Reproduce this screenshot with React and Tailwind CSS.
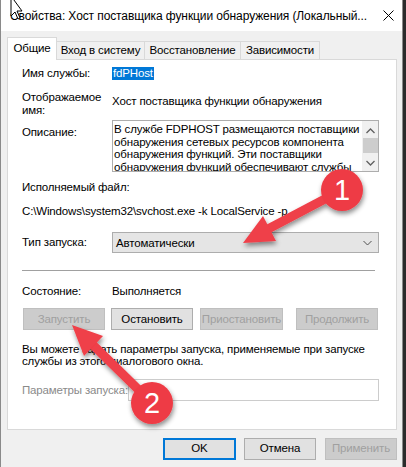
import React from "react";

const font = { fontFamily: '"Liberation Sans", Arial, sans-serif' };

const Tab = ({ children, active, w }) =>
    active ? (
        <div className={`relative z-10 -mb-px h-[23px] ${w} flex items-center justify-center bg-white border border-b-0 border-[#d9d9d9] whitespace-nowrap`}>
            {children}
        </div>
    ) : (
        <div className={`h-[18px] ${w} flex items-center justify-center bg-[#f0f0f0] border border-b-0 border-l-0 border-[#d9d9d9] whitespace-nowrap`}>
            {children}
        </div>
    );

const Btn = ({ children, w, disabled, primary, className = "" }) => (
    <div
        className={`h-[22px] ${w} flex items-center justify-center whitespace-nowrap ${className} ${
            disabled
                ? "bg-[#cccccc] border border-[#bfbfbf] text-[#a0a0a0]"
                : primary
                ? "bg-[#e1e1e1] border-2 border-[#0078d7] text-black"
                : "bg-[#e1e1e1] border border-[#adadad] text-black"
        }`}
    >
        {children}
    </div>
);

const Overlay = () => (
    <svg className="absolute inset-0 pointer-events-none" width="406" height="467" viewBox="0 0 406 467">
        <defs>
            <filter id="sh" x="-30%" y="-30%" width="160%" height="160%">
                <feDropShadow dx="1" dy="3" stdDeviation="2.5" floodColor="#000" floodOpacity="0.45" />
            </filter>
        </defs>
        <g filter="url(#sh)" fill="#ef3f48">
            {/* arrow 1 */}
            <line x1="342" y1="190" x2="268" y2="229" stroke="#ef3f48" strokeWidth="9" />
            <polygon points="243,243 276,241 263,216" />
            <circle cx="342" cy="190" r="21" fill="#ee3a44" />
            {/* arrow 2 */}
            <line x1="152" y1="403" x2="92" y2="344" stroke="#ef3f48" strokeWidth="9" />
            <polygon points="72,325 103,336 84,356" />
            <circle cx="152" cy="403" r="21" fill="#ee3a44" />
        </g>
        <text x="342" y="200" textAnchor="middle" fill="#fff" fontSize="29" fontFamily="Liberation Sans, Arial, sans-serif">1</text>
        <text x="152" y="413" textAnchor="middle" fill="#fff" fontSize="29" fontFamily="Liberation Sans, Arial, sans-serif">2</text>
        {/* mouse cursor */}
        <polygon points="11,-4 11,16 15,12 18,19 20,18 17,11 22,11" fill="#fff" stroke="#000" strokeWidth="1" />
    </svg>
);

export default function App() {
    return (
        <div className="relative w-[406px] h-[467px] bg-[#2b2b2b] overflow-hidden text-[12px] text-black" style={font}>
            <div className="w-[403px] h-full bg-[#f0f0f0] border-l border-r border-[#8a8a8a] flex flex-col">
                {/* title bar */}
                <div className="h-[31px] bg-white flex items-center justify-between pl-[9px] pr-[8px]">
                    <span className="leading-[14px] whitespace-nowrap tracking-[-0.1px]">
                        Свойства: Хост поставщика функции обнаружения (Локальный...
                    </span>
                    <svg className="shrink-0" width="11" height="11" viewBox="0 0 11 11">
                        <path d="M0.5 0.5 L10.5 10.5 M10.5 0.5 L0.5 10.5" stroke="#000" strokeWidth="1" />
                    </svg>
                </div>

                <div className="pl-[6px] pt-[6px] flex flex-col text-[11.5px] tracking-[-0.15px]">
                    {/* tabs */}
                    <div className="flex items-end h-[22px]">
                        <Tab active w="w-[50px]">Общие</Tab>
                        <Tab w="w-[88px]">Вход в систему</Tab>
                        <Tab w="w-[96px]">Восстановление</Tab>
                        <Tab w="w-[79px]">Зависимости</Tab>
                    </div>

                    {/* panel */}
                    <div className="w-[390px] h-[371px] bg-white border border-[#d9d9d9] pl-[14px] flex flex-col leading-[14px]">
                        <div className="flex mt-[6px] h-[14px]">
                            <div className="w-[90px]">Имя службы:</div>
                            <div className="mt-[1px] h-[13px] px-[1px] bg-[#0078d7] text-white leading-[13px]">fdPHost</div>
                        </div>

                        <div className="flex mt-[11px]">
                            <div className="w-[90px] leading-[13px]">
                                Отображаемое
                                <br />
                                имя:
                            </div>
                            <div className="pt-[3px] whitespace-nowrap">Хост поставщика функции обнаружения</div>
                        </div>

                        <div className="flex mt-[3px]">
                            <div className="w-[90px] pt-[5px]">Описание:</div>
                            <div className="w-[267px] h-[52px] border border-[#adadad] flex overflow-hidden">
                                <div className="flex-1 pl-[1px] pt-[2px] leading-[12.6px] overflow-hidden whitespace-nowrap">
                                    В службе FDPHOST размещаются поставщики
                                    <br />
                                    обнаружения сетевых ресурсов компонента
                                    <br />
                                    обнаружения функций. Эти поставщики
                                    <br />
                                    обнаружения функций обеспечивают службы
                                </div>
                                <div className="w-[16px] shrink-0 bg-[#f0f0f0] flex flex-col items-center">
                                    <svg className="mt-[7px]" width="9" height="6" viewBox="0 0 9 6">
                                        <path d="M0.5 5 L4.5 1 L8.5 5" fill="none" stroke="#606060" strokeWidth="1.3" />
                                    </svg>
                                    <div className="mt-[4px] w-[15px] h-[15px] bg-[#cdcdcd]" />
                                    <svg className="mt-[7px]" width="9" height="6" viewBox="0 0 9 6">
                                        <path d="M0.5 1 L4.5 5 L8.5 1" fill="none" stroke="#606060" strokeWidth="1.3" />
                                    </svg>
                                </div>
                            </div>
                        </div>

                        <div className="mt-[8px]">Исполняемый файл:</div>
                        <div className="mt-[10px] whitespace-nowrap">C:\Windows\system32\svchost.exe -k LocalService -p</div>

                        <div className="flex items-center mt-[14px]">
                            <div className="w-[90px] -mt-[2px]">Тип запуска:</div>
                            <div className="w-[267px] h-[21px] bg-[#e5e5e5] border border-[#adadad] flex items-center pl-[3px] pr-[6px] justify-between">
                                <span>Автоматически</span>
                                <svg width="9" height="6" viewBox="0 0 9 6">
                                    <path d="M0.5 1 L4.5 5 L8.5 1" fill="none" stroke="#505050" strokeWidth="1" />
                                </svg>
                            </div>
                        </div>

                        <div className="mt-[17px] w-[353px] h-px bg-[#a0a0a0]" />

                        <div className="flex mt-[13px]">
                            <div className="w-[90px]">Состояние:</div>
                            <div>Выполняется</div>
                        </div>

                        <div className="flex mt-[10px] ml-[1px]">
                            <Btn w="w-[82px]" disabled>Запустить</Btn>
                            <Btn w="w-[82px]" className="ml-[6px]">Остановить</Btn>
                            <Btn w="w-[83px]" disabled className="ml-[7px]">Приостановить</Btn>
                            <Btn w="w-[82px]" disabled className="ml-[13px]">Продолжить</Btn>
                        </div>

                        <div className="mt-[13px] leading-[12px] whitespace-nowrap">
                            Вы можете задать параметры запуска, применяемые при запуске
                            <br />
                            службы из этого диалогового окна.
                        </div>

                        <div className="flex items-center mt-[12px]">
                            <div className="w-[106px] text-[#8a8a8a] whitespace-nowrap">Параметры запуска:</div>
                            <div className="w-[251px] h-[22px] border border-[#cccccc] bg-white" />
                        </div>
                    </div>

                    {/* dialog buttons */}
                    <div className="flex mt-[8px] w-[390px] justify-end">
                        <Btn w="w-[73px]" primary>OK</Btn>
                        <Btn w="w-[72px]" className="ml-[8px]">Отмена</Btn>
                        <Btn w="w-[72px]" disabled className="ml-[9px]">Применить</Btn>
                    </div>
                </div>
            </div>
            <Overlay />
        </div>
    );
}
